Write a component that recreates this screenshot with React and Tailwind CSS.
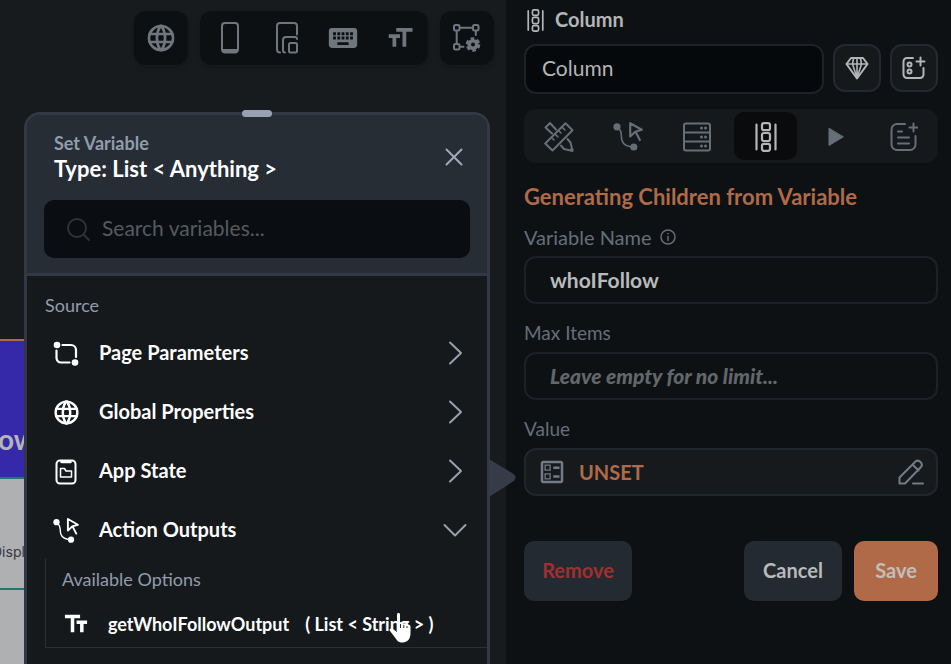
import React from "react";
import { TbWorld } from "react-icons/tb";
import { MdKeyboard, MdFormatSize, MdTextFields, MdOutlineBallot } from "react-icons/md";

function Svg({ w, h, className, children, sw = 2 }) {
  return (
    <svg
      width={w}
      height={h}
      viewBox={`0 0 ${w} ${h}`}
      fill="none"
      stroke="currentColor"
      strokeWidth={sw}
      strokeLinecap="round"
      strokeLinejoin="round"
      className={className}
      aria-hidden="true"
    >
      {children}
    </svg>
  );
}

const PhoneIcon = () => (
  <Svg w={20} h={32}>
    <rect x="2" y="1" width="16" height="29" rx="3" />
    <path d="M2 27.5h16v1a2.5 2.5 0 0 1-2.5 2.5h-11A2.5 2.5 0 0 1 2 28.500z" fill="currentColor" strokeWidth="1" />
  </Svg>
);

const DevicesIcon = () => (
  <Svg w={22} h={32}>
    <path d="M4 30.500A3 3 0 0 1 1 27.500V4a3 3 0 0 1 3-3h14a3 3 0 0 1 3 3v8.500" />
    <path d="M9 30.500A2 2 0 0 1 7 28.500V18a3 3 0 0 1 3-3h9a2 2 0 0 1 2 2" />
    <rect x="13" y="21" width="8" height="9.500" rx="1.500" />
  </Svg>
);

const CanvasGearIcon = () => (
  <Svg w={30} h={30} sw={2}>
    <rect x="2" y="2" width="5.500" height="5.500" rx="1.500" />
    <rect x="21" y="2" width="5.500" height="5.500" rx="1.500" />
    <rect x="2" y="21" width="5.500" height="5.500" rx="1.500" />
    <path d="M8 4.700h12.500M4.700 8v12.500M23.800 8v4M8 23.800h3.500" />
    <circle cx="21" cy="21.500" r="3.800" strokeWidth="3.600" />
    <circle cx="21" cy="21.500" r="5.900" strokeWidth="2.800" strokeLinecap="butt" strokeDasharray="3.600 2.580" />
  </Svg>
);

const ColumnIcon = ({ small }) => (
  <svg
    width={small ? 17 : 22}
    height={small ? 23 : 30}
    viewBox="0 0 22 30"
    fill="none"
    stroke="currentColor"
    strokeWidth="2.200"
    strokeLinecap="round"
    aria-hidden="true"
  >
    <path d="M1.500 2.500v25M20.500 2.500v25" />
    <rect x="7" y="1.200" width="8" height="7" rx="2" />
    <rect x="7" y="11" width="8" height="8" rx="2" />
    <rect x="7" y="21.800" width="8" height="7" rx="2" />
  </svg>
);

const GemIcon = () => (
  <Svg w={24} h={24}>
    <path d="M6 2h12l4.500 6L12 22.500 1.500 8z" />
    <path d="M1.500 8h21M8.500 2.500 7.500 8 12 22 16.500 8l-1-5.500M12 2.500V22" strokeWidth="1.600" />
  </Svg>
);

const AddWidgetIcon = () => (
  <Svg w={24} h={24}>
    <path d="M11 2H5a3.500 3.500 0 0 0-3.500 3.500v13A3.500 3.500 0 0 0 5 22h13a3.500 3.500 0 0 0 3.500-3.500V12" />
    <path d="M18.500 1.500v8M14.500 5.500h8" />
    <circle cx="7.500" cy="8.500" r="2" />
    <circle cx="7.500" cy="15.500" r="2" />
  </Svg>
);

const DesignIcon = () => (
  <Svg w={30} h={30}>
    <path d="M21.500 1.200 28.500 8.200 8.500 28.500 1.200 21.500z" />
    <path d="m18 5 3 3M14.500 8.500l2.500 2.500M11 12l3 3M7.500 15.500l2.500 2.500" strokeWidth="1.600" />
    <path d="M8 11.500 1.500 5.500l4.500-4.500 6 6.500" />
    <path d="m23.500 17 3 3.500 2 8.500-8.500-2-3-3.500" />
    <path d="M27.500 27.500h.5" strokeWidth="3" />
  </Svg>
);

const ActionIcon = ({ size = 30 }) => (
  <svg
    width={size}
    height={size}
    viewBox="0 0 30 30"
    fill="none"
    stroke="currentColor"
    strokeWidth="2.200"
    strokeLinejoin="round"
    strokeLinecap="round"
    aria-hidden="true"
  >
    <circle cx="4" cy="4.800" r="3.600" fill="currentColor" stroke="none" />
    <circle cx="20.800" cy="25" r="3.600" fill="currentColor" stroke="none" />
    <path d="M4 6c6 2 3.500 8 5 12.500 1.500 4.500 5 6.500 12 6.500" strokeWidth="1.600" />
    <path d="M17.200 1.200v13.300l5-4.800 6.600-1.900zM23 10.500l3.800 7.500" />
  </svg>
);

const ServerIcon = () => (
  <Svg w={28} h={30}>
    <rect x="1" y="1.500" width="26" height="27" rx="2" />
    <path d="M1 10.500h26M1 19.500h26" />
    <path d="M18.500 6h.01M22.500 6h.01M18.500 15h.01M22.500 15h.01M18.500 24h.01M22.500 24h.01" strokeWidth="3" />
  </Svg>
);

const PlayIcon = () => (
  <Svg w={20} h={20} sw={1}>
    <path d="M4 1.500v17L18 10z" fill="currentColor" />
  </Svg>
);

const NoteAddIcon = () => (
  <Svg w={28} h={30}>
    <path d="M15 2H7a5.500 5.500 0 0 0-5.500 5.500v15A5.500 5.500 0 0 0 7 28h13a5.500 5.500 0 0 0 5.500-5.500V14" />
    <path d="M23.500 1.500v8M19.500 5.500h8M8 9.500h4M8 15.500h11M8 21.500h11" />
  </Svg>
);

const ParamsIcon = () => (
  <Svg w={26} h={26} sw={2.2}>
    <circle cx="4" cy="4" r="3.300" fill="currentColor" stroke="none" />
    <circle cx="22" cy="21.500" r="3.300" fill="currentColor" stroke="none" />
    <path d="M9.500 4H18a5 5 0 0 1 5 5v7M16.500 21.500H8a4.500 4.500 0 0 1-4.500-4.500V9.500" />
  </Svg>
);

const AppStateIcon = () => (
  <Svg w={22} h={26}>
    <rect x="1.500" y="1.500" width="19" height="23" rx="3.500" />
    <path d="M6.500 3h9" strokeWidth="2.500" />
    <path d="M5.500 9.500h4l1.500 2.500h5.500v6h-11z" strokeWidth="1.500" />
  </Svg>
);

const Chevron = ({ down }) =>
  down ? (
    <Svg w={24} h={24}>
      <path d="m1.500 7 10.500 10.500L22.500 7" />
    </Svg>
  ) : (
    <Svg w={24} h={24}>
      <path d="M7 1.500 18 12 7 22.500" />
    </Svg>
  );

function ToolButton({ label, children, wide }) {
  return (
    <button
      aria-label={label}
      className={
        wide
          ? "flex flex-1 items-center justify-center"
          : "flex h-[54px] w-[54px] items-center justify-center rounded-xl bg-[#0d1013] shadow-md"
      }
    >
      {children}
    </button>
  );
}

function SourceRow({ icon, label, open }) {
  return (
    <button aria-expanded={!!open} className="flex h-[59px] w-full items-center pr-5 pl-[26px] text-left text-white">
      <span className="flex w-[26px] justify-center pt-0.5">{icon}</span>
      <span className="ml-5 flex-1 pb-0.5 text-[20px] leading-6 font-bold">{label}</span>
      <span className="text-[#97a1ae]">
        <Chevron down={open} />
      </span>
    </button>
  );
}

function VariablePopup() {
  return (
    <div
      role="dialog"
      aria-label="Set Variable"
      className="absolute top-28 right-4 bottom-0 left-6 flex flex-col rounded-t-2xl border-x-[3px] border-t-[3px] border-[#323944] bg-[#15191c]"
    >
      <span className="absolute -top-[5px] left-1/2 h-[7px] w-[30px] -translate-x-1/2 rounded bg-[#98a1b0]" />
      <div className="rounded-t-xl border-b-[3px] border-[#323944] bg-[#272d35] px-[17px] pt-4 pb-[15px]">
        <div className="flex items-center justify-between pr-1 pl-2.5">
          <div>
            <p className="text-[18px] leading-6 font-bold text-[#929cad]">Set Variable</p>
            <h2 className="text-[22px] leading-7 font-bold text-white">Type: List &lt; Anything &gt;</h2>
          </div>
          <button aria-label="Close" className="text-[#a0a9b8]">
            <Svg w={24} h={24}>
              <path d="m4.500 4.500 15 15M19.500 4.500l-15 15" />
            </Svg>
          </button>
        </div>
        <label className="mt-[17px] flex h-[58px] items-center rounded-[10px] bg-[#0a0e12] pl-5">
          <Svg w={28} h={28} className="text-[#2c3339]">
            <circle cx="13" cy="13" r="9" />
            <path d="m20 20 5 5" />
          </Svg>
          <input
            aria-label="Search variables"
            placeholder="Search variables..."
            className="ml-2.5 w-full flex-1 bg-transparent pb-0.5 text-[21px] text-white outline-none placeholder:text-[#565a5d]"
          />
        </label>
      </div>
      <p className="mt-[17px] mb-1.5 pl-[18px] text-[18px] leading-6 text-[#929cad]">Source</p>
      <SourceRow icon={<ParamsIcon />} label="Page Parameters" />
      <SourceRow icon={<TbWorld size={29} strokeWidth={2} className="shrink-0" />} label="Global Properties" />
      <SourceRow icon={<AppStateIcon />} label="App State" />
      <SourceRow icon={<ActionIcon size={26} />} label="Action Outputs" open />
      <div className="ml-[18px] flex h-[89px] shrink-0 flex-col border-b border-l border-[#2a3038] pt-2 pl-4">
        <p className="text-[18px] leading-6 text-[#929cad]">Available Options</p>
        <button className="mt-[15px] flex h-9 items-center text-[18px] leading-6 font-bold text-white">
          <MdTextFields size={28} />
          <span className="ml-[18px]">getWhoIFollowOutput</span>
          <span className="ml-4">( List &lt; String &gt; )</span>
        </button>
      </div>
      <svg
        width="27"
        height="38"
        viewBox="0 0 27 38"
        className="absolute top-[344px] -right-[29px] text-[#353c48]"
        fill="currentColor"
        aria-hidden="true"
      >
        <path d="M0 0 24 14.500q5 4 0 8L0 38z" />
      </svg>
      <svg width="26" height="32" viewBox="0 0 26 32" className="absolute top-[497px] left-[361px]" aria-hidden="true">
        <path
          d="M9 2.500C9 .5 12 .5 12 2.500V10.500l1-.5q2 0 2.500 1.500 3-1 3.500 1 3.500-.5 3.500 2V21c0 6-3 9.500-8 9.500-4 0-5.500-2-7.500-5L2 19c-1.500-2 1-3.500 3-2l4 3z"
          fill="white"
        />
        <path d="M12.500 12v4M15.800 13v3M19 14v2" stroke="#272b2e" strokeWidth="1" />
      </svg>
    </div>
  );
}

const field =
  "h-12 w-full rounded-xl border-2 border-[#1c2127] bg-transparent pb-0.5 pl-6 text-[21px] font-bold text-[#b9babb] outline-none";

function PropertyPanel() {
  const tabs = [
    ["Design", <DesignIcon />],
    ["Actions", <ActionIcon />],
    ["Backend query", <ServerIcon />],
    ["Children", <ColumnIcon />],
    ["Animations", <PlayIcon />],
    ["Notes", <NoteAddIcon />],
  ];
  return (
    <aside className="w-[445px] shrink-0 bg-[#0d1114] pt-2 pr-[13px] pl-[18px]">
      <div className="flex h-6 items-center text-[#b4b5b6]">
        <span className="ml-[3px]">
          <ColumnIcon small />
        </span>
        <h1 className="ml-[11px] pb-0.5 text-[20px] leading-6 font-bold">Column</h1>
      </div>
      <div className="mt-3 flex items-start gap-[9px]">
        <input
          aria-label="Widget name"
          defaultValue="Column"
          className="h-[50px] min-w-0 flex-1 rounded-xl border-2 border-[#1d2229] bg-[#06090c] pb-1 pl-4 text-[21px] text-[#b4b5b6] outline-none"
        />
        <button aria-label="Theme" className="flex h-12 w-12 items-center justify-center rounded-xl border-2 border-[#232931] bg-[#15191c] text-[#b4b5b6]">
          <GemIcon />
        </button>
        <button aria-label="Add component" className="flex h-12 w-12 items-center justify-center rounded-xl border-2 border-[#232931] bg-[#15191c] text-[#b4b5b6]">
          <AddWidgetIcon />
        </button>
      </div>
      <div role="tablist" className="mt-[15px] flex h-[54px] items-center rounded-xl bg-[#15191c]">
        {tabs.map(([name, icon]) => (
          <button
            key={name}
            role="tab"
            aria-label={name}
            aria-selected={name === "Children"}
            className={
              name === "Children"
                ? "mx-[3px] flex h-12 flex-1 items-center justify-center rounded-[10px] bg-[#0a0b0d] pt-0.5 text-[#b4b5b6]"
                : "mx-[3px] flex h-12 flex-1 items-center justify-center pt-0.5 text-[#666e79]"
            }
          >
            {icon}
          </button>
        ))}
      </div>
      <h2 className="mt-5 text-[22px] leading-7 font-bold text-[#b06a48]">Generating Children from Variable</h2>
      <div className="mt-3.5 flex items-center gap-2 text-[#666e79]">
        <label htmlFor="variable-name" className="text-[20px] leading-6">
          Variable Name
        </label>
        <Svg w={16} h={16} sw={1}>
          <circle cx="8" cy="8" r="7" strokeWidth="1.500" />
          <path d="M8 7.500v4M8 4.500v.3" strokeWidth="1.500" />
        </Svg>
      </div>
      <input id="variable-name" defaultValue="whoIFollow" className={`${field} mt-[7px]`} />
      <label htmlFor="max-items" className="mt-[17px] block text-[19px] leading-6 text-[#666e79]">
        Max Items
      </label>
      <input
        id="max-items"
        placeholder="Leave empty for no limit..."
        className={`${field} mt-[7px] placeholder:font-black placeholder:text-[#64676a] placeholder:italic`}
      />
      <p className="mt-[17px] text-[19px] leading-6 text-[#666e79]">Value</p>
      <button className="mt-[7px] flex h-12 w-full items-center rounded-xl border-2 border-[#20262d] bg-[#171a1d] pr-3 pl-3">
        <MdOutlineBallot size={30} className="-ml-px text-[#737b89]" />
        <span className="ml-3 flex-1 text-left text-[20px] leading-7 font-bold text-[#b06a48]">UNSET</span>
        <Svg w={26} h={26} className="text-[#737b89]">
          <path d="M1.500 24.500v-6L17.500 2.500q2.500-2 5 .5t.5 5L7 24.500zM14.500 5.500l6 6M15 24.500h10" />
        </Svg>
      </button>
      <div className="mt-[45px] flex gap-3 text-[20px] font-bold">
        <button className="h-[60px] w-[108px] rounded-[10px] bg-[#242a32] pb-0.5 text-[#a02f30]">Remove</button>
        <span className="flex-1" />
        <button className="h-[60px] w-[98px] rounded-[10px] bg-[#242a32] pb-0.5 text-[#b9babb]">Cancel</button>
        <button className="h-[60px] w-[84px] rounded-[10px] bg-[#b06a48] pb-0.5 text-[#c2bebb]">Save</button>
      </div>
    </aside>
  );
}

export default function App() {
  return (
    <div className="flex min-h-screen bg-[#181b1e] font-[Lato,sans-serif]">
      <main className="relative z-10 flex min-w-0 flex-1 flex-col">
        <div className="flex justify-end gap-3 pt-[11px] pr-3 text-[#6f767e]">
          <ToolButton label="Language">
            <TbWorld size={32} strokeWidth={2} />
          </ToolButton>
          <div className="flex h-[54px] w-[228px] rounded-xl bg-[#0d1013] pl-0.5 shadow-md">
            <ToolButton wide label="Phone"><PhoneIcon /></ToolButton>
            <ToolButton wide label="Devices"><DevicesIcon /></ToolButton>
            <ToolButton wide label="Keyboard"><MdKeyboard size={34} /></ToolButton>
            <ToolButton wide label="Text size"><MdFormatSize size={30} /></ToolButton>
          </div>
          <ToolButton label="Canvas settings"><CanvasGearIcon /></ToolButton>
        </div>
        <div className="mt-[274px] flex w-10 flex-1 flex-col overflow-hidden border-t-2 border-[#b06a48] bg-[#afb0b2]">
          <div className="flex h-[138px] items-end border-b-2 border-[#24776c] bg-[#3629a9] pb-5">
            <span className="-ml-0.5 text-[28px] leading-9 font-bold text-[#b4b5b6]">ow</span>
          </div>
          <div className="flex h-[111px] items-end border-b-2 border-[#24776c] pb-[26px]">
            <span className="-ml-2 font-[Inter,sans-serif] text-[14px] leading-5 text-[#36393c]">Displ</span>
          </div>
        </div>
        <VariablePopup />
      </main>
      <PropertyPanel />
    </div>
  );
}
